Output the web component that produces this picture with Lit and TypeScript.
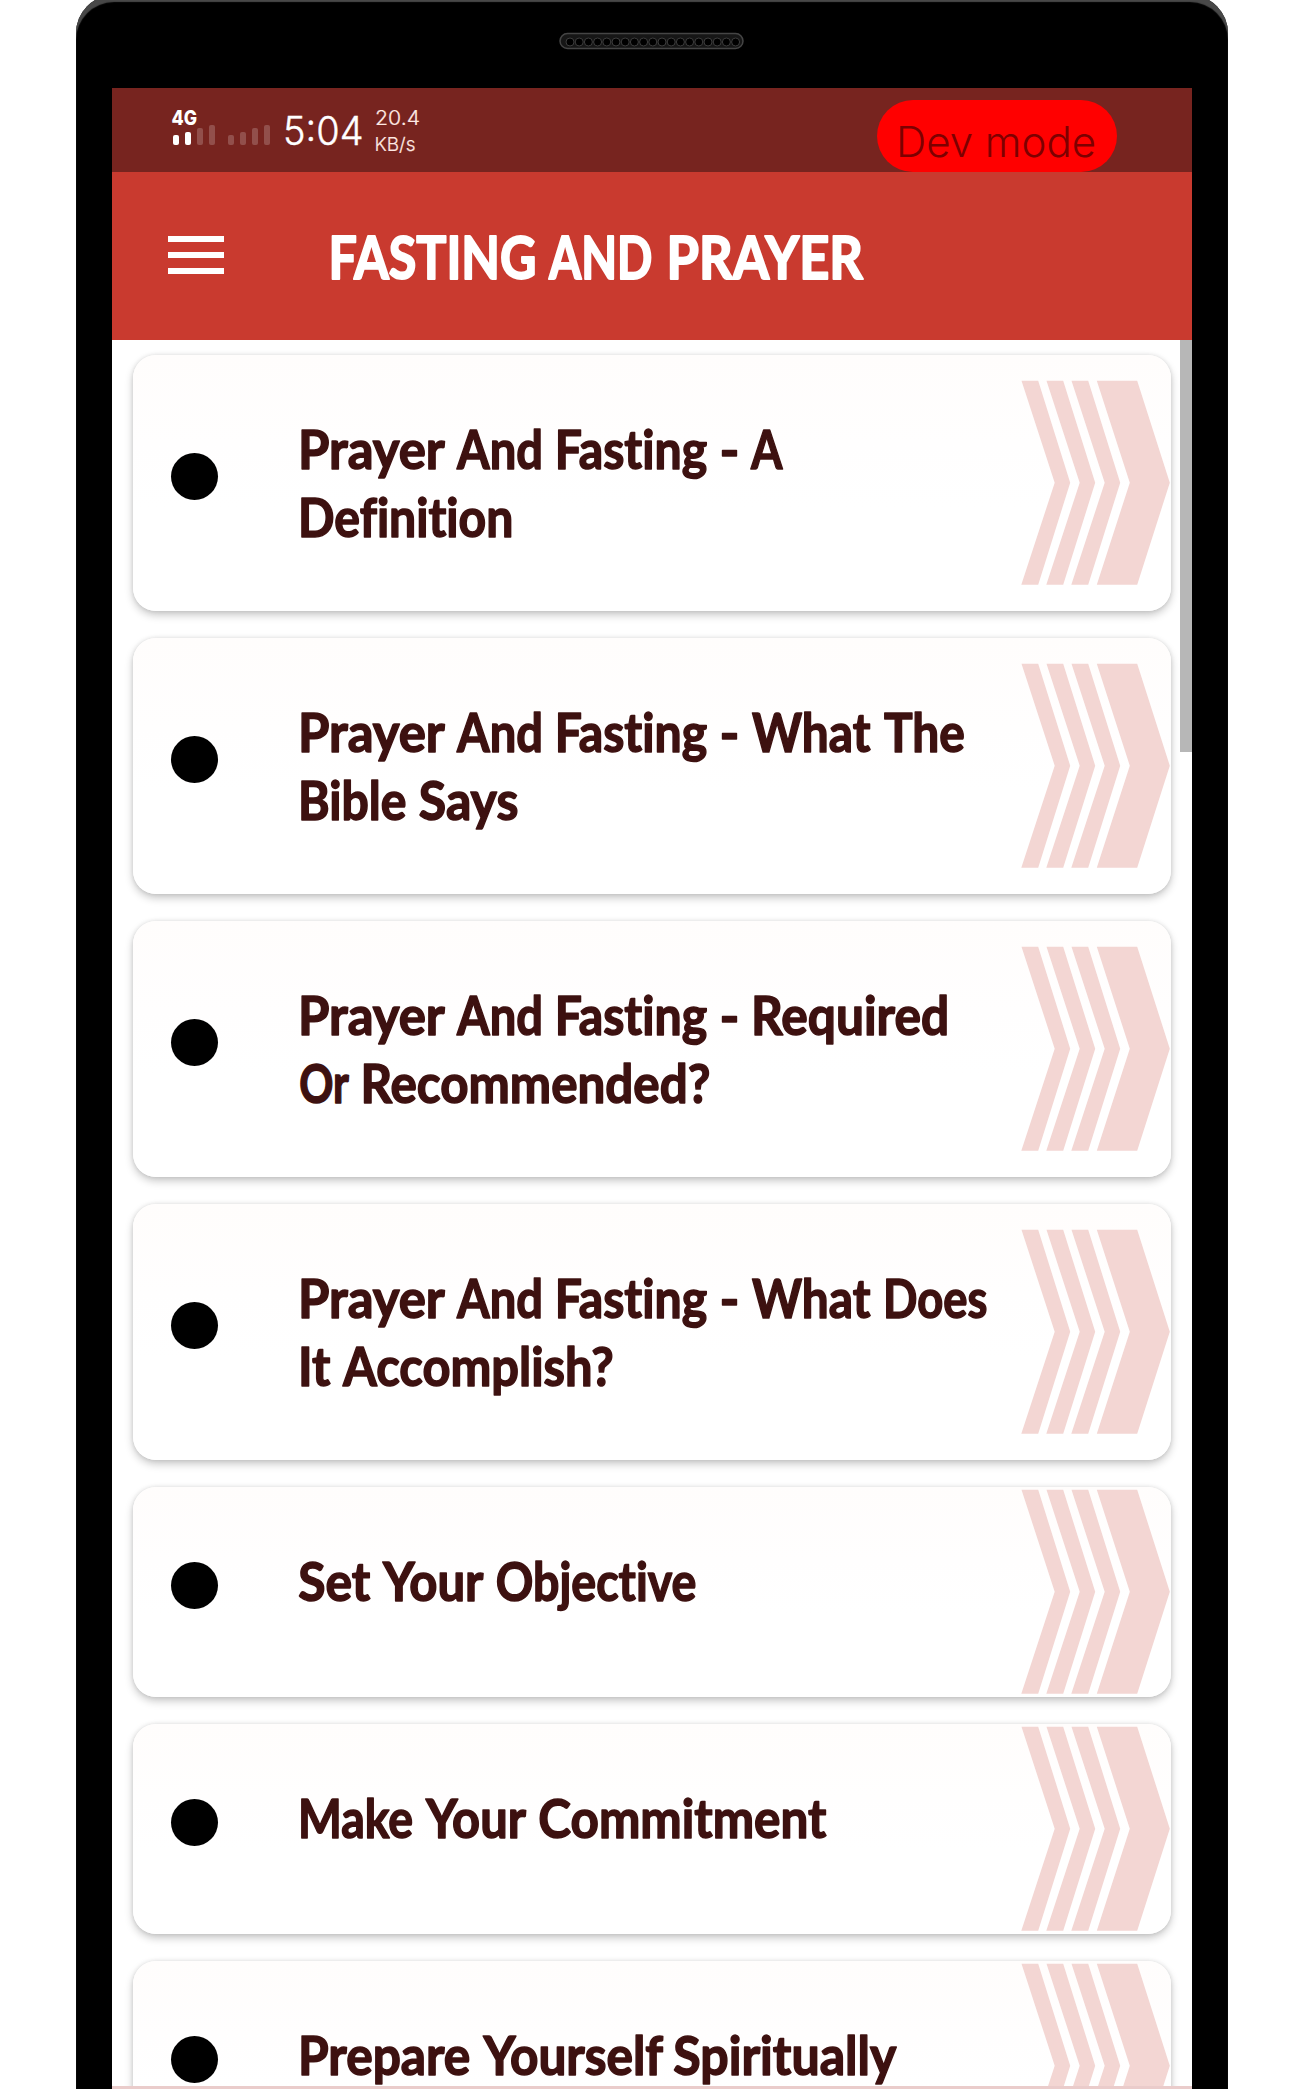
import { LitElement, html, svg, css } from 'lit';
import { customElement, property } from 'lit/decorators.js';

/** A word with the left and right edge of its ink on the 1304px canvas. */
type Word = [text: string, left: number, right: number];

const PREFIX: Word[] = [['Prayer', 301, 444.4], ['And', 457, 540.5], ['Fasting', 557.7, 706.7], ['-', 720.6, 738]];

const TOPICS: Word[][][] = [
  [[...PREFIX, ['A', 751, 782]], [['Definition', 301, 511]]],
  [[...PREFIX, ['What', 752, 870], ['The', 884, 964.4]], [['Bible', 301, 406], ['Says', 420, 518]]],
  [[...PREFIX, ['Required', 754, 946.7]], [['Or', 300.4, 348.4], ['Recommended?', 363.4, 710]]],
  [[...PREFIX, ['What', 752, 870], ['Does', 886, 987]], [['It', 301, 330], ['Accomplish?', 343, 613.4]]],
  [[['Set', 299.5, 370], ['Your', 383, 483], ['Objective', 497, 696]]],
  [[['Make', 301, 412.7], ['Your', 426, 525.5], ['Commitment', 539.5, 826]]],
  [[['Prepare', 301, 470], ['Yourself', 483.4, 662.7], ['Spiritually', 674.5, 896]]],
];

/** Lays condensed words on a baseline, allowing for each glyph's side bearings. */
const drawWords = (words: Word[], origin: number, y: number) =>
  words.map(([text, left, right]) => {
    const lead = /^[PBDRFMIE]/.test(text) ? 3 : /^[SOC-]/.test(text) ? 1.2 : 0;
    const trail = /[ndhlGD]$/.test(text) ? 2.4 : /-$/.test(text) ? 1.4 : 0.4;
    return svg`<text x=${left - origin - lead} y=${y} textLength=${right - left + lead + trail} lengthAdjust="spacingAndGlyphs">${text}</text>`;
  });

@customElement('topic-card')
export class TopicCard extends LitElement {
  @property({ attribute: false }) lines: Word[][] = [];

  static styles = css`
    :host { display: block; flex: none; }
    .card { box-sizing: border-box; display: flex; align-items: center; height: 210px; padding: 0 1px 0 38px;
      border-radius: 23px; background: linear-gradient(#fffdfc, #fffefe 35%, #fff 60%);
      box-shadow: 0 4px 9px rgba(0,0,0,.22), 0 0 4px rgba(0,0,0,.1); }
    .double { height: 256px; }
    .dot { flex: none; width: 47px; height: 47px; margin-bottom: 13px; border-radius: 50%; background: #000; }
    .lines { flex: 1; align-self: flex-start; display: flex; flex-direction: column; margin: 53px 0 0 76px; }
    .line { display: block; width: 720px; height: 68px; overflow: visible; font: 700 53.5px Lato, sans-serif;
      font-variant-ligatures: none; fill: #3d1110; stroke: #3d1110; stroke-width: 1.5px; stroke-linejoin: round; }
    .arrow { flex: none; width: 150px; height: 206px; margin-bottom: 1px; fill: #f3d6d3; }
  `;

  render() {
    return html`<div class="card ${this.lines.length > 1 ? 'double' : ''}">
      <span class="dot"></span>
      <div class="lines">${this.lines.map((line) => html`<svg class="line" viewBox="0 0 720 68">${drawWords(line, 294, 61)}</svg>`)}</div>
      <svg class="arrow" viewBox="0 0 150 206">
        ${[0, 25, 50].map((x) => svg`<path d="M${x + 1.5} .8h16.7L${x + 50.2} 102.7 ${x + 18.2} 204.7h-16.9L${x + 34.7} 102.7z"></path>`)}
        <path d="M76.8 .8h40.4l32.6 101.9-32.6 102H76.8l33-102z"></path>
      </svg>
    </div>`;
  }
}

@customElement('app-root')
export class AppRoot extends LitElement {
  static styles = css`
    :host { display: block; height: 2089px; overflow: hidden; background: #fff; font-family: Inter, sans-serif; }
    .phone { box-sizing: border-box; display: flex; flex-direction: column; width: 1152px; height: 2094px; margin: -5px 0 0 76px;
      padding: 0 36px; background: #000; border-radius: 38px 38px 0 0; box-shadow: inset 0 7px 1px #484848; }
    .bezel { flex: none; display: flex; justify-content: center; height: 93px; }
    .speaker { width: 186px; height: 18px; margin-top: 37px; }
    .screen { flex: 1; min-height: 0; position: relative; display: flex; flex-direction: column; background: #fff; overflow: hidden; }
    .status { flex: none; box-sizing: border-box; display: flex; height: 84px; padding-left: 59px; background: #77241f; }
    .readout { flex: none; width: 260px; height: 84px; }
    .net { font: 800 20px Inter, sans-serif; fill: #fff; }
    .clock { font: 300 39px Inter, sans-serif; fill: #fff; stroke: #fff; stroke-width: .4px; }
    .rate { font: 300 20.5px Inter, sans-serif; fill: #ffe9e4; stroke: #ffe9e4; stroke-width: .2px; }
    .unit { font-size: 18.5px; }
    .dev { flex: none; width: 240px; height: 72px; margin: 12px 75px 0 auto; border-radius: 36px; background: #f00; }
    .devtext { font: 300 42px Inter, sans-serif; fill: #7d0000; }
    .bar { flex: none; display: flex; align-items: center; height: 168px; padding-left: 56px; background: #c93a2f; }
    .menu { flex: none; display: flex; flex-direction: column; gap: 10px; width: 56px; margin-top: -2px; }
    .stroke { height: 6px; background: #fff; }
    .title { flex: none; width: 700px; height: 168px; margin-left: 104px; overflow: visible; font: 700 59.5px Lato, sans-serif;
      font-variant-ligatures: none; fill: #fff; stroke: #fff; stroke-width: 2px; stroke-linejoin: round; }
    .list { flex: 1; min-height: 0; display: flex; flex-direction: column; gap: 27px; padding: 15px 21px 0; overflow: hidden; }
    .thumb { position: absolute; right: 0; top: 252px; width: 12px; height: 412px; background: #b7b7b7; }
    .strip { position: absolute; left: 0; right: 0; bottom: 0; height: 3px; background: #eacccb; }
  `;

  render() {
    const holes = Array.from({ length: 19 }, (_, i) => 11 + i * 9.2);
    const bars = [[0, 10, 1], [12, 13, 1], [24, 17, 0.2], [36, 20, 0.2], [55, 10, 0.2], [67, 13, 0.2], [79, 17, 0.2], [91, 20, 0.2]];
    const title: Word[] = [['FASTING', 331.5, 534], ['AND', 549, 650], ['PRAYER', 669.6, 862.7]];
    return html`<div class="phone">
      <div class="bezel"><svg class="speaker" viewBox="0 0 186 18">
        <rect x="1" y="1.5" width="183" height="15" rx="7.5" fill="#161616" stroke="#454545" stroke-width="1.5"></rect>
        ${holes.map((x) => svg`<circle cx=${x} cy="10" r="4" fill="#000" stroke="#3c3c3c" stroke-width="1"></circle>`)}
      </svg></div>
      <div class="screen">
        <div class="status">
          <svg class="readout" viewBox="0 0 260 84">
            <text class="net" x="0.5" y="37" textLength="25.5" lengthAdjust="spacingAndGlyphs">4G</text>
            ${bars.map(([x, h, o]) => svg`<rect x=${x + 2} y=${57 - h} width="6" height=${h} rx="2" fill="#fff" fill-opacity=${o}></rect>`)}
            <text class="clock" x="112" y="56.5" textLength="80.5" lengthAdjust="spacingAndGlyphs">5:04</text>
            <text class="rate" x="204" y="37" textLength="45" lengthAdjust="spacingAndGlyphs">20.4</text>
            <text class="rate unit" x="203.5" y="62.5" textLength="41" lengthAdjust="spacingAndGlyphs">KB/s</text>
          </svg>
          <svg class="dev" viewBox="0 0 240 72">
            <text class="devtext" x="19" y="57" textLength="200" lengthAdjust="spacingAndGlyphs">Dev mode</text>
          </svg>
        </div>
        <div class="bar">
          <div class="menu"><div class="stroke"></div><div class="stroke"></div><div class="stroke"></div></div>
          <svg class="title" viewBox="0 0 700 168">${drawWords(title, 328, 106.5)}</svg>
        </div>
        <div class="list">${TOPICS.map((lines) => html`<topic-card .lines=${lines}></topic-card>`)}</div>
        <div class="thumb"></div>
        <div class="strip"></div>
      </div>
    </div>`;
  }
}
